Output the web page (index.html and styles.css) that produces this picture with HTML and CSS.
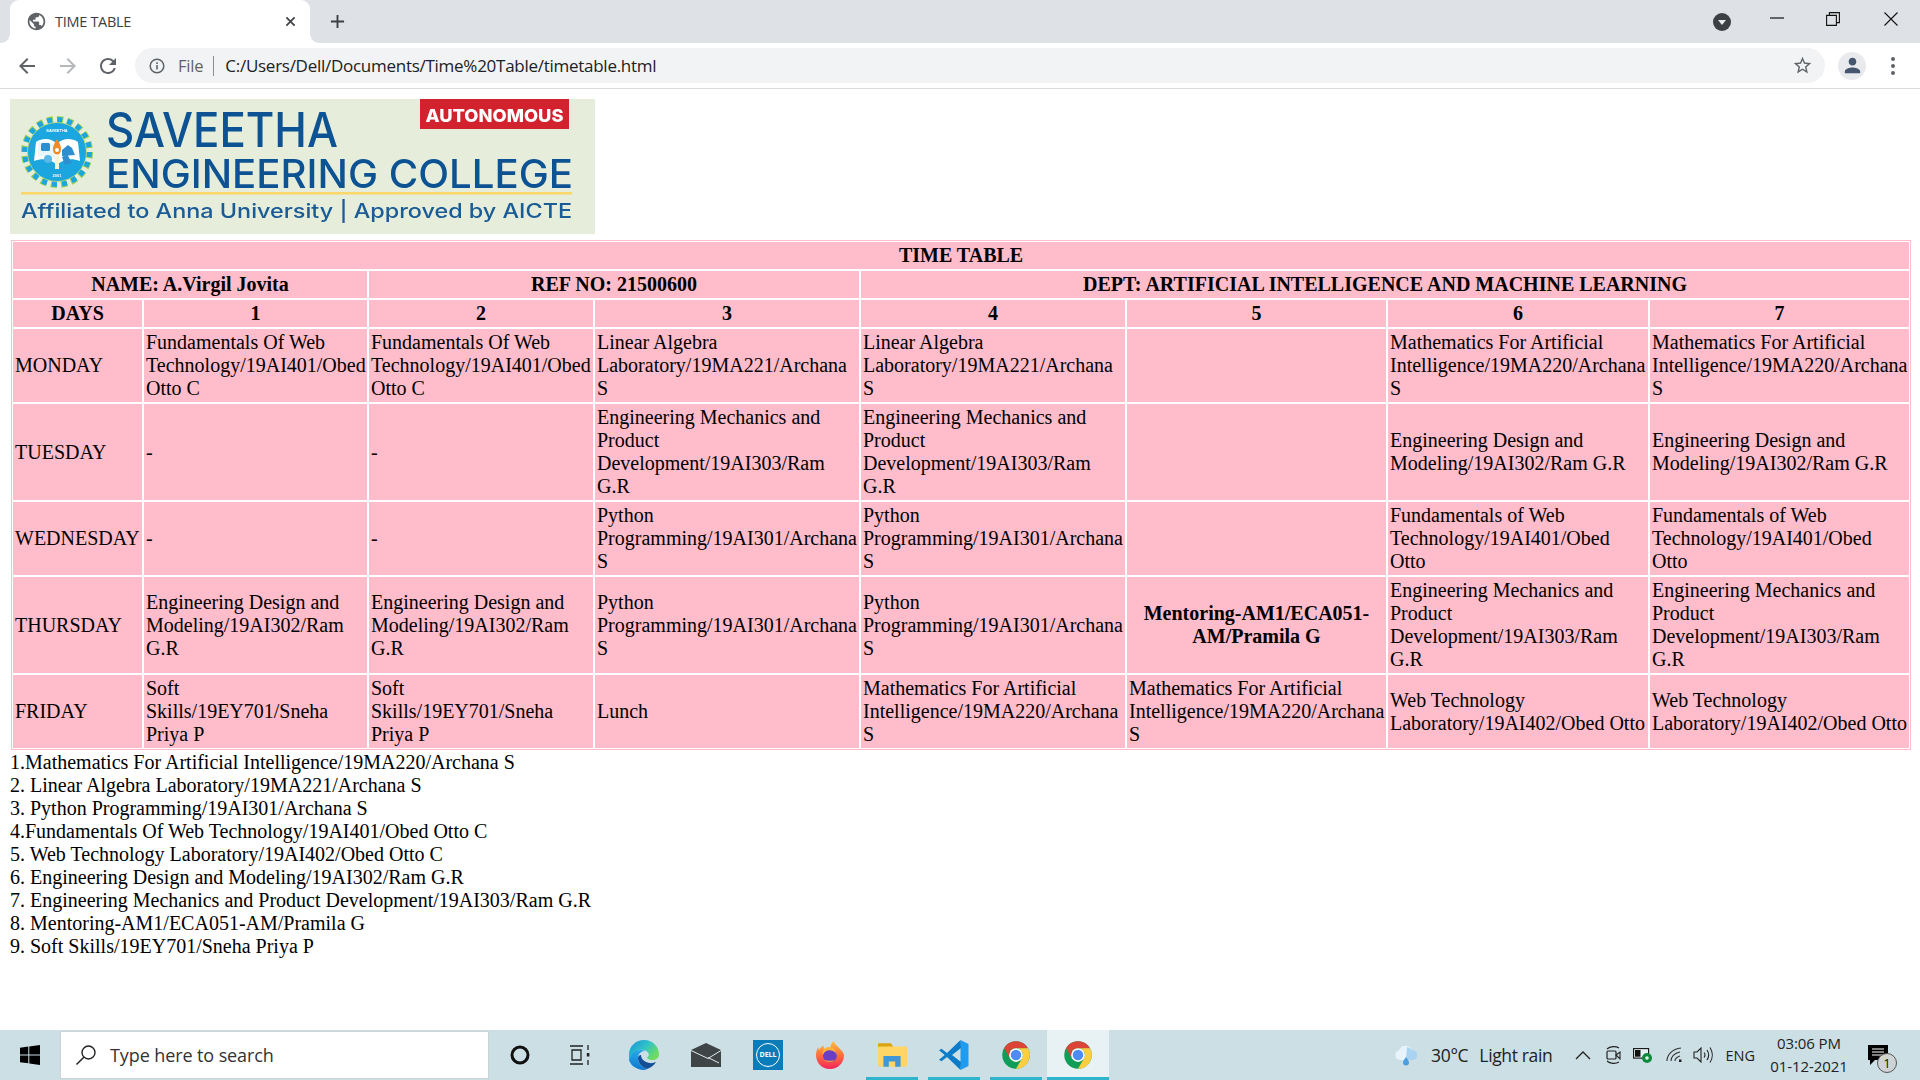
FILE: index.html
```html
<!DOCTYPE html>
<html lang="en">
<head>
<meta charset="utf-8">
<title>TIME TABLE</title>
<link rel="stylesheet" href="styles.css">
</head>
<body>
<div class="screen">
  <header class="browser">
    <div class="tabstrip">
      <div class="tab">
        <svg class="favicon" viewBox="0 0 24 24"><path fill="#5f6368" d="M12 2C6.48 2 2 6.48 2 12s4.48 10 10 10 10-4.48 10-10S17.52 2 12 2zm-1 17.93c-3.95-.49-7-3.85-7-7.93 0-.62.08-1.21.21-1.79L9 15v1c0 1.1.9 2 2 2v1.93zm6.9-2.54c-.26-.81-1-1.39-1.9-1.39h-1v-3c0-.55-.45-1-1-1H8v-2h2c.55 0 1-.45 1-1V7h2c1.1 0 2-.9 2-2v-.41c2.93 1.19 5 4.06 5 7.41 0 2.08-.8 3.97-2.1 5.39z"/></svg>
        <span class="tab-title">TIME TABLE</span>
        <svg class="tab-close" viewBox="0 0 12 12"><path d="M1.500 1.500l9 9M10.500 1.500l-9 9" stroke="#3c4043" stroke-width="1.800" fill="none"/></svg>
      </div>
      <svg class="new-tab" viewBox="0 0 16 16"><path d="M8 1v14M1 8h14" stroke="#3c4043" stroke-width="2" fill="none"/></svg>
      <svg class="tab-search" viewBox="0 0 18 18"><circle cx="9" cy="9" r="9" fill="#3c4043"/><path d="M5 7h8l-4 5z" fill="#e8eaed"/></svg>
      <svg class="win win-min" viewBox="0 0 14 14"><path d="M0 7h14" stroke="#111" stroke-width="1.200" fill="none"/></svg>
      <svg class="win win-max" viewBox="0 0 14 14"><path d="M.6 3.400h9.800v10H.6zM3.400 3.400V.6h10v10h-3" stroke="#111" stroke-width="1.100" fill="none"/></svg>
      <svg class="win win-close" viewBox="0 0 14 14"><path d="M.5.5l13 13M13.500.5l-13 13" stroke="#111" stroke-width="1.100" fill="none"/></svg>
    </div>
    <div class="toolbar">
      <svg class="tool tool-back" viewBox="0 0 24 24"><path fill="#5f6368" d="M20 11H7.830l5.590-5.590L12 4l-8 8 8 8 1.410-1.410L7.830 13H20v-2z"/></svg>
      <svg class="tool tool-forward" viewBox="0 0 24 24"><path fill="#b4b7bb" d="M4 11h12.170l-5.590-5.590L12 4l8 8-8 8-1.410-1.410L16.170 13H4v-2z"/></svg>
      <svg class="tool tool-reload" viewBox="0 0 24 24"><path fill="#5f6368" d="M17.650 6.350A7.958 7.958 0 0 0 12 4c-4.420 0-7.990 3.580-7.990 8s3.570 8 7.990 8c3.730 0 6.840-2.550 7.730-6h-2.080A5.990 5.990 0 0 1 12 18c-3.310 0-6-2.690-6-6s2.690-6 6-6c1.660 0 3.140.690 4.220 1.780L13 11h7V4l-2.350 2.350z"/></svg>
      <div class="omnibox">
        <svg class="info" viewBox="0 0 16 16"><circle cx="8" cy="8" r="6.800" fill="none" stroke="#5f6368" stroke-width="1.500"/><path d="M8 7v4.500M8 4.300v1.600" stroke="#5f6368" stroke-width="1.600" fill="none"/></svg>
        <span class="scheme">File</span>
        <span class="divider"></span>
        <span class="url">C:/Users/Dell/Documents/Time%20Table/timetable.html</span>
        <svg class="star" viewBox="0 0 24 24"><path fill="#5f6368" d="M22 9.240l-7.190-.620L12 2 9.190 8.630 2 9.240l5.460 4.730L5.820 21 12 17.270 18.180 21l-1.630-7.030L22 9.240zM12 15.400l-3.760 2.270 1-4.280-3.320-2.880 4.380-.380L12 6.100l1.710 4.040 4.380.380-3.320 2.880 1 4.280L12 15.400z"/></svg>
      </div>
      <div class="avatar"><svg viewBox="0 0 24 24"><path fill="#47566f" d="M12 12c2.210 0 4-1.790 4-4s-1.790-4-4-4-4 1.790-4 4 1.790 4 4 4zm0 2c-2.670 0-8 1.340-8 4v2h16v-2c0-2.660-5.330-4-8-4z"/></svg></div>
      <div class="kebab"><i></i><i></i><i></i></div>
    </div>
  </header>

  <main class="page">
    <svg class="logo" viewBox="0 0 585 135">
      <defs><filter id="soft" x="-2%" y="-2%" width="104%" height="104%"><feGaussianBlur stdDeviation="0.35"/></filter></defs>
      <rect width="585" height="135" fill="#e6eedb"/>
      <g filter="url(#soft)">
        <rect x="410" width="149" height="30" fill="#d2232f"/>
        <text x="415.500" y="23" class="lg-auto" textLength="138" lengthAdjust="spacingAndGlyphs">AUTONOMOUS</text>
        <text x="96" y="48" class="lg-a" textLength="232" lengthAdjust="spacingAndGlyphs">SAVEETHA</text>
        <text x="96" y="89" class="lg-b" textLength="467" lengthAdjust="spacingAndGlyphs">ENGINEERING COLLEGE</text>
        <rect x="11" y="93" width="551" height="2.500" fill="#fbd667"/>
        <text x="11" y="119" class="lg-c" textLength="551" lengthAdjust="spacingAndGlyphs">Affiliated to Anna University | Approved by AICTE</text>
        <g transform="translate(47 53)">
          <circle r="32.500" fill="none" stroke="#a6d05a" stroke-width="7" stroke-dasharray="6.200 4"/>
          <circle r="32" fill="none" stroke="#1ba6df" stroke-width="6" stroke-dasharray="5 5.050"/>
          <circle r="29.500" fill="#1ba6df"/>
          <circle r="29.500" fill="none" stroke="#c6de6f" stroke-width=".8"/>
          <path d="M-21-10C-13-15-5-13 0-8 5-13 13-15 21-10L23 9C14 6 6 7 0 13-6 7-14 6-23 9Z" fill="#fff"/>
          <path d="M-19-9C-13-12-6-10-2-6V7C-7 4-13 3-19 5Z" fill="#e9f6fc"/>
          <rect x="-16" y="-9" width="9" height="8" rx="1.500" fill="#2f8fd0"/>
          <path d="M5-2l6-5 4 3 3 7-13 1z" fill="#2f8fd0"/>
          <circle cx="-9" cy="7" r="4" fill="#58b8e6"/>
          <path d="M5 5l5-3 5 9-7 2z" fill="#2f8fd0"/>
          <path d="M0-13C4-7 5-3 3 1 1 3-1 3-3 1-5-3-4-7 0-13Z" fill="#ef8a2a"/>
          <circle cy="-2" r="2" fill="#fff"/>
          <path d="M-2 4h4v13h-4z" fill="#eef7d8"/>
          <text y="-20" class="lg-tiny" text-anchor="middle">SAVEETHA</text>
          <text y="25" class="lg-tiny" text-anchor="middle">2001</text>
        </g>
      </g>
    </svg>

    <table class="timetable">
      <colgroup>
        <col class="c-days"><col class="c-a1"><col class="c-a"><col class="c-b"><col class="c-b"><col class="c-c"><col class="c-d"><col class="c-c">
      </colgroup>
      <tr><th colspan="8">TIME TABLE</th></tr>
      <tr><th colspan="2">NAME: A.Virgil Jovita</th><th colspan="2">REF NO: 21500600</th><th colspan="4">DEPT: ARTIFICIAL INTELLIGENCE AND MACHINE LEARNING</th></tr>
      <tr><th>DAYS</th><th>1</th><th>2</th><th>3</th><th>4</th><th>5</th><th>6</th><th>7</th></tr>
      <tr>
        <td>MONDAY</td>
        <td>Fundamentals Of Web Technology/19AI401/Obed Otto C</td>
        <td>Fundamentals Of Web Technology/19AI401/Obed Otto C</td>
        <td>Linear Algebra Laboratory/19MA221/Archana S</td>
        <td>Linear Algebra Laboratory/19MA221/Archana S</td>
        <td></td>
        <td>Mathematics For Artificial Intelligence/19MA220/Archana S</td>
        <td>Mathematics For Artificial Intelligence/19MA220/Archana S</td>
      </tr>
      <tr>
        <td>TUESDAY</td>
        <td>-</td>
        <td>-</td>
        <td>Engineering Mechanics and Product Development/19AI303/Ram G.R</td>
        <td>Engineering Mechanics and Product Development/19AI303/Ram G.R</td>
        <td></td>
        <td>Engineering Design and Modeling/19AI302/Ram G.R</td>
        <td>Engineering Design and Modeling/19AI302/Ram G.R</td>
      </tr>
      <tr>
        <td>WEDNESDAY</td>
        <td>-</td>
        <td>-</td>
        <td>Python Programming/19AI301/Archana S</td>
        <td>Python Programming/19AI301/Archana S</td>
        <td></td>
        <td>Fundamentals of Web Technology/19AI401/Obed Otto</td>
        <td>Fundamentals of Web Technology/19AI401/Obed Otto</td>
      </tr>
      <tr>
        <td>THURSDAY</td>
        <td>Engineering Design and Modeling/19AI302/Ram G.R</td>
        <td>Engineering Design and Modeling/19AI302/Ram G.R</td>
        <td>Python Programming/19AI301/Archana S</td>
        <td>Python Programming/19AI301/Archana S</td>
        <td class="strong">Mentoring-AM1/ECA051-AM/Pramila G</td>
        <td>Engineering Mechanics and Product Development/19AI303/Ram G.R</td>
        <td>Engineering Mechanics and Product Development/19AI303/Ram G.R</td>
      </tr>
      <tr>
        <td>FRIDAY</td>
        <td>Soft Skills/19EY701/Sneha Priya P</td>
        <td>Soft Skills/19EY701/Sneha Priya P</td>
        <td>Lunch</td>
        <td>Mathematics For Artificial Intelligence/19MA220/Archana S</td>
        <td>Mathematics For Artificial Intelligence/19MA220/Archana S</td>
        <td>Web Technology Laboratory/19AI402/Obed Otto</td>
        <td>Web Technology Laboratory/19AI402/Obed Otto</td>
      </tr>
    </table>

    <div class="legend">
      <div>1.Mathematics For Artificial Intelligence/19MA220/Archana S</div>
      <div>2. Linear Algebra Laboratory/19MA221/Archana S</div>
      <div>3. Python Programming/19AI301/Archana S</div>
      <div>4.Fundamentals Of Web Technology/19AI401/Obed Otto C</div>
      <div>5. Web Technology Laboratory/19AI402/Obed Otto C</div>
      <div>6. Engineering Design and Modeling/19AI302/Ram G.R</div>
      <div>7. Engineering Mechanics and Product Development/19AI303/Ram G.R</div>
      <div>8. Mentoring-AM1/ECA051-AM/Pramila G</div>
      <div>9. Soft Skills/19EY701/Sneha Priya P</div>
    </div>
  </main>

  <footer class="taskbar">
    <div class="start">
      <svg viewBox="0 0 20 20"><path fill="#000" d="M0 2.800L8.300 1.600V9.400H0zM9.300 1.500L20 0V9.400H9.300zM0 10.500H8.300V18.300L0 17.200zM9.300 10.500H20V20L9.300 18.500z"/></svg>
    </div>
    <div class="search">
      <svg viewBox="0 0 22 22"><circle cx="13.500" cy="8.500" r="6.500" fill="none" stroke="#222" stroke-width="1.400"/><path d="M8.800 13.200L1.500 20.500" stroke="#222" stroke-width="1.500" fill="none"/></svg>
      <span>Type here to search</span>
    </div>
    <div class="slot"><svg class="ic18" viewBox="0 0 20 20"><circle cx="10" cy="10" r="8" fill="none" stroke="#111" stroke-width="3"/></svg></div>
    <div class="slot"><svg class="ic22" viewBox="0 0 22 22"><path d="M1 2h13M1 20h13M3 6h9v10H3zM19 1v5M19 16v5" stroke="#222" stroke-width="1.300" fill="none"/><rect x="17.800" y="9" width="2.600" height="3.500" fill="#222"/></svg></div>
    <div class="slot"><svg class="ic30" viewBox="0 0 30 30">
      <defs>
        <linearGradient id="edgeA" x1="0" y1="0" x2="1" y2="0.600"><stop offset="0" stop-color="#1a8fd8"/><stop offset=".55" stop-color="#2fc3c8"/><stop offset="1" stop-color="#6fdc5c"/></linearGradient>
        <linearGradient id="edgeB" x1="0" y1="0" x2="0" y2="1"><stop offset="0" stop-color="#27a8ea"/><stop offset="1" stop-color="#0f78cf"/></linearGradient>
        <linearGradient id="ffA" x1="0" y1="0" x2="0" y2="1"><stop offset="0" stop-color="#ffbd3f"/><stop offset=".5" stop-color="#ff7139"/><stop offset="1" stop-color="#f5245c"/></linearGradient>
      </defs>
      <path d="M0 15C0 6 7 0 15 0c9 0 15 7 15 14 0 4-3 6-6.500 6-3 0-5-1-5.500-2.500 2-1 2.500-3 1-5-2-2.500-6-3.500-10-2C5 12 1.500 15 0 19z" fill="url(#edgeA)"/>
      <path d="M0 19c1.500-4 4-7 8-8.500 3-1 6-.5 8 .5-4 0-7 3-7 7 0 5 4 9 9 11-1 .6-2 1-3 1C7 30 0 24 0 19z" fill="url(#edgeB)"/>
      <path d="M9 18c0 5 4 9 9 11 3-.7 7-3.500 9-7-3 1.500-7 1.500-10 0-3-1.500-5-3.500-5-7-1.500 0-3 1-3 3z" fill="#124f96"/>
    </svg></div>
    <div class="slot"><svg class="ic30" viewBox="0 0 30 24"><path d="M0 7L15 0l15 7v17H0z" fill="#3f4446"/><path d="M0 7.500L17 15.500 30 7.500M17 14.500L28 20" fill="none" stroke="#e4eef1" stroke-width="1"/></svg></div>
    <div class="slot"><div class="dell"><span>DELL</span></div></div>
    <div class="slot"><svg class="ic30" viewBox="0 0 30 30">
      <path d="M15 29C7 29 1 23 1 15c0-3 1-6 2-8l1 3c1-2 3-4 5-4-1 2 0 3 1 4 2-1 4-1 6-1-1-3 0-6 3-8 0 3 3 4 5 7 1 1 4 3 5 7 0 8-6 14-14 14z" fill="url(#ffA)"/>
      <circle cx="15" cy="15.500" r="7" fill="#6a3fc4"/>
      <path d="M8 15c1-4 6-6 10-4 3 1 4 4 3 7 2-5-1-11-7-11-5 0-8 4-6 8z" fill="#ffb13a"/>
      <path d="M9 20c3 3 8 3 11 0-3 1-7 1-11 0z" fill="#ff8f3a"/>
    </svg></div>
    <div class="slot open"><svg class="ic30" viewBox="0 0 28 24">
      <path d="M1 2a1 1 0 0 1 1-1h11l2 3v2H1z" fill="#dca40c"/>
      <rect x="1" y="4" width="27" height="19" rx="1" fill="#ffd566"/>
      <path d="M6 23V13h16v10h-5v-5h-6v5z" fill="#3f97d8"/>
    </svg></div>
    <div class="slot open"><svg class="ic30" viewBox="0 0 30 30">
      <path d="M21.500 0L29.500 4V26L21.500 30 21.500 0Z" fill="#1f9cf0"/>
      <path d="M21.500 0L8 13 2.500 8.800 0 10.200 5.700 15 0 19.800 2.500 21.200 8 17 21.500 30 22 22 13 15 22 8z" fill="#0c7cc9"/>
    </svg></div>
    <div class="slot open"><svg class="ic30" viewBox="0 0 24 24"><circle cx="12" cy="12" r="11" fill="#0f9d58"/><path fill="#db4437" d="M2.470 6.500A11 11 0 0 1 21.530 6.500H12A5.500 5.500 0 0 0 7.240 14.750Z"/><path fill="#ffcd40" d="M21.530 6.500A11 11 0 0 1 12 23L16.760 14.750A5.500 5.500 0 0 0 12 6.500Z"/><circle cx="12" cy="12" r="5.500" fill="#fff"/><circle cx="12" cy="12" r="4.200" fill="#4d8cf5"/></svg></div>
    <div class="slot open active"><svg class="ic30" viewBox="0 0 24 24"><circle cx="12" cy="12" r="11" fill="#0f9d58"/><path fill="#db4437" d="M2.470 6.500A11 11 0 0 1 21.530 6.500H12A5.500 5.500 0 0 0 7.240 14.750Z"/><path fill="#ffcd40" d="M21.530 6.500A11 11 0 0 1 12 23L16.760 14.750A5.500 5.500 0 0 0 12 6.500Z"/><circle cx="12" cy="12" r="5.500" fill="#fff"/><circle cx="12" cy="12" r="4.200" fill="#4d8cf5"/></svg></div>

    <div class="tray">
      <svg class="weather" viewBox="0 0 26 22"><path d="M7 16a5 5 0 0 1-1-9.800A7 7 0 0 1 19 6a5 5 0 0 1 1 10z" fill="#e8f4fb"/><path d="M14 3a7 7 0 0 1 5 3 5 5 0 0 1 1 10h-7z" fill="#a9d3f0"/><path d="M13 13c2 3 3 4 3 5.500a3 3 0 0 1-6 0C10 17 11 16 13 13z" fill="#4a9fe0"/></svg>
      <span class="temp">30°C</span>
      <span class="cond">Light rain</span>
      <svg class="caret" viewBox="0 0 16 9"><path d="M1 8l7-7 7 7" fill="none" stroke="#222" stroke-width="1.300"/></svg>
      <svg class="t-meet" viewBox="0 0 16 20"><path d="M1 4C4 1 10 1 13 3M1 16c3 3 9 3 12 1" fill="none" stroke="#222" stroke-width="1.100"/><rect x="1" y="6" width="9" height="8" rx="1" fill="none" stroke="#222" stroke-width="1.200"/><path d="M10 10l4-3v7z" fill="none" stroke="#222" stroke-width="1.100"/></svg>
      <svg class="t-batt" viewBox="0 0 20 16"><rect x=".6" y="1.600" width="15" height="9.500" fill="#e5f0f3" stroke="#111" stroke-width="1.100"/><rect x="2" y="3" width="5.500" height="6.700" fill="#111"/><circle cx="14" cy="11" r="5" fill="#0f8a3c"/><circle cx="14" cy="11" r="1.800" fill="#e8f5e8"/></svg>
      <svg class="t-wifi" viewBox="0 0 18 16"><path d="M1 14C1 8 6 2 15 1M5 14C5 10 8 6 14 5M9 14c0-2 2-4 5-5" fill="none" stroke="#333" stroke-width="1.100"/><rect x="13" y="12.500" width="2.500" height="2.500" fill="#222"/></svg>
      <svg class="t-vol" viewBox="0 0 20 18"><path d="M1 6h3l4-4v14l-4-4H1z" fill="none" stroke="#222" stroke-width="1.100"/><path d="M11 6.500c1.200 1.500 1.200 3.500 0 5M14 4c2 3 2 7 0 10M17 1.500c3 4.500 3 10.500 0 15" fill="none" stroke="#222" stroke-width="1.100"/></svg>
      <span class="lang">ENG</span>
      <div class="clock"><span>03:06 PM</span><span>01-12-2021</span></div>
      <div class="notify">
        <svg viewBox="0 0 20 20"><path d="M0 0h20v15H7l-5 5v-5H0z" fill="#000"/><path d="M4 4h12M4 7h12M4 10h12" stroke="#fff" stroke-width="1.200"/></svg>
        <span class="badge">1</span>
      </div>
    </div>
  </footer>
</div>
</body>
</html>
```
FILE: styles.css
```css
* { box-sizing: border-box; }
html, body { margin: 0; padding: 0; height: 100%; background: #fff; }
svg { display: block; flex: none; }

.screen { width: 1920px; height: 1080px; display: flex; flex-direction: column; overflow: hidden; }

/* browser chrome */
.browser { flex: none; font-family: "Open Sans", "Noto Sans", sans-serif; }
.tabstrip { height: 43px; background: #dee1e6; display: flex; align-items: center; padding-left: 10px; }
.tab { position: relative; width: 300px; height: 43px; background: #fff; border-radius: 9px 9px 0 0; display: flex; align-items: center; padding-left: 16px; }
.tab::before, .tab::after { content: ""; position: absolute; bottom: 0; width: 9px; height: 9px; }
.tab::before { left: -9px; background: radial-gradient(circle at 0 0, #dee1e6 8.500px, #fff 9px); }
.tab::after { right: -9px; background: radial-gradient(circle at 100% 0, #dee1e6 8.500px, #fff 9px); }
.favicon { width: 21px; height: 21px; }
.tab-title { margin-left: 8px; font-size: 14.500px; color: #3c4043; width: 230px; white-space: nowrap; letter-spacing: -.3px; }
.tab-close { width: 11px; height: 11px; }
.new-tab { width: 15px; height: 15px; margin-left: 20px; }
.tab-search { width: 18px; height: 18px; margin-left: 1368px; margin-top: 1px; }
.win { width: 14px; height: 14px; margin-top: -5px; }
.win-min { margin-left: 39px; margin-top: -7px; }
.win-max { margin-left: 42px; }
.win-close { margin-left: 44px; }

.toolbar { height: 46px; background: #fff; border-bottom: 1px solid #dadce0; display: flex; align-items: center; padding-left: 15px; }
.tool { width: 24px; height: 24px; }
.tool-forward { margin-left: 17px; }
.tool-reload { margin-left: 16px; }
.omnibox { width: 1690px; height: 35px; margin-left: 15px; background: #f1f3f4; border-radius: 18px; display: flex; align-items: center; padding-left: 14px; }
.info { width: 16px; height: 16px; }
.scheme { margin-left: 13px; color: #5f6368; font-size: 16.500px; letter-spacing: -.2px; }
.divider { width: 1px; height: 20px; background: #8a8d91; margin: 0 11px 0 10px; }
.url { color: #202124; width: 1567px; white-space: nowrap; font-size: 17px; letter-spacing: -.27px; }
.star { width: 21px; height: 21px; }
.avatar { width: 28px; height: 28px; margin-left: 13px; border-radius: 50%; background: #e8eaed; display: flex; align-items: center; justify-content: center; }
.avatar svg { width: 23px; height: 23px; }
.kebab { margin-left: 25px; width: 6px; display: flex; flex-direction: column; gap: 3px; }
.kebab i { display: block; width: 4px; height: 4px; border-radius: 50%; background: #5f6368; }

/* page */
.page { flex: 1; min-height: 0; padding: 10px 9px 0 10px; font-family: "Liberation Serif", "Times New Roman", serif; font-size: 20px; line-height: 23px; color: #000; }
.logo { width: 585px; height: 135px; margin-bottom: 6px; }
.lg-auto { font-family: Inter, "Liberation Sans", sans-serif; font-weight: 800; font-size: 18px; fill: #fff; }
.lg-a { font-family: Inter, "Liberation Sans", sans-serif; font-weight: 500; font-size: 48px; fill: #0b5393; }
.lg-b { font-family: Inter, "Liberation Sans", sans-serif; font-weight: 500; font-size: 40px; fill: #0b5393; }
.lg-c { font-family: Inter, "Liberation Sans", sans-serif; font-weight: 500; font-size: 20px; fill: #1a5b96; }
.lg-tiny { font-family: "Liberation Sans", sans-serif; font-weight: 700; font-size: 4px; fill: #fff; }

.timetable { width: 1900px; margin-left: 1px; table-layout: fixed; border-collapse: separate; border-spacing: 2px; box-shadow: inset 0 0 0 1px #ffbcca; }
.c-days { width: 129px; }
.c-a1 { width: 223px; }
.c-a { width: 224px; }
.c-b { width: 264px; }
.c-c { width: 259px; }
.c-d { width: 260px; }
.timetable th, .timetable td { background: #ffbcca; padding: 2px; vertical-align: middle; }
.timetable th { font-weight: bold; text-align: center; }
.timetable td { text-align: left; }
.timetable td.strong { font-weight: bold; text-align: center; }

.legend { margin-top: 1px; }

/* taskbar */
.taskbar { flex: none; height: 50px; background: #cbdfe5; display: flex; align-items: stretch; font-family: "Open Sans", "Noto Sans", sans-serif; color: #222; }
.start { width: 60px; display: flex; align-items: center; justify-content: center; }
.start svg { width: 20px; height: 20px; }
.search { width: 429px; margin: 1px 0; background: #fff; border: 1px solid #ccd3d6; display: flex; align-items: center; padding-left: 14px; }
.search svg { width: 22px; height: 22px; }
.search span { margin-left: 13px; font-size: 18px; color: #333; letter-spacing: -.1px; }
.slot { position: relative; width: 62px; display: flex; align-items: center; justify-content: center; }
.slot.open::after { content: ""; position: absolute; left: 5px; right: 5px; bottom: 0; height: 3px; background: #2eb4cc; }
.slot.active { background: #e8f1f4; }
.slot.active::after { left: 0; right: 0; }
.ic18 { width: 20px; height: 20px; }
.ic22 { width: 22px; height: 22px; margin-right: 5px; }
.ic30 { width: 30px; height: 30px; }
.dell { width: 30px; height: 30px; background: #0a7cba; display: flex; align-items: center; justify-content: center; }
.dell span { width: 24px; height: 24px; border: 1px solid #fff; border-radius: 50%; color: #fff; font-size: 7px; font-weight: 700; line-height: 22px; text-align: center; font-family: "Open Sans", sans-serif; }

.tray { flex: 1; min-width: 0; display: flex; align-items: center; padding-left: 284px; font-size: 17.500px; }
.weather { width: 26px; height: 22px; }
.temp { margin-left: 12px; letter-spacing: -.3px; }
.cond { margin-left: 11px; letter-spacing: -.35px; }
.caret { width: 16px; height: 9px; margin-left: 23px; }
.t-meet { width: 16px; height: 20px; margin-left: 15px; }
.t-batt { width: 20px; height: 16px; margin-left: 11px; }
.t-wifi { width: 18px; height: 16px; margin-left: 13px; }
.t-vol { width: 20px; height: 18px; margin-left: 9px; }
.lang { margin-left: 12px; font-size: 14.500px; }
.clock { width: 84px; margin-left: 12px; display: flex; flex-direction: column; align-items: center; font-size: 15px; line-height: 23px; letter-spacing: -.1px; }
.notify { position: relative; width: 20px; height: 20px; margin-left: 17px; }
.notify svg { width: 20px; height: 20px; }
.badge { position: absolute; left: 9px; top: 8px; width: 20px; height: 20px; border-radius: 50%; background: #cfd3d4; border: 1px solid #555; font-size: 13px; line-height: 18px; text-align: center; color: #111; }
```
